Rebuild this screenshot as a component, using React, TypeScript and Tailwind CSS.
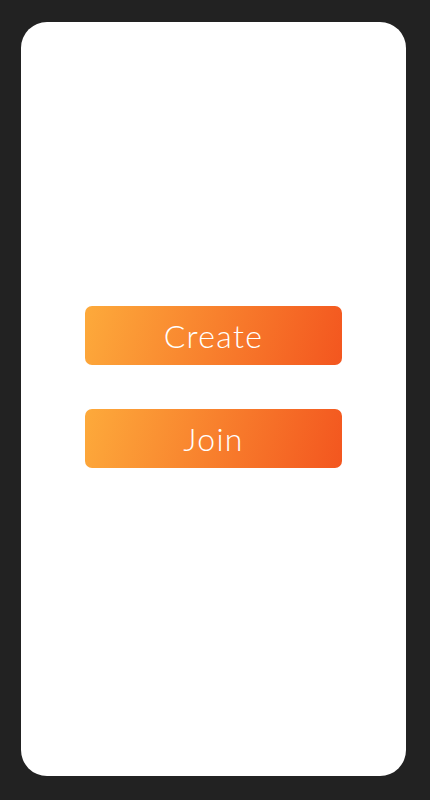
export default function App() {
  const buttons = ['Create', 'Join']

  return (
    <div className="w-[430px] h-[800px] bg-[#222222] pt-[22px] pl-[21px]">
      <div className="w-[385px] h-[754px] bg-white rounded-[26px] flex flex-col items-center pt-[284px] gap-[44px]">
        {buttons.map((label) => (
          <button
            key={label}
            className="w-[257px] h-[59px] rounded-[7px] bg-linear-[105deg] from-[#fdaa3b] to-[#f3561f] text-white text-[32px] font-light tracking-[1.3px] leading-none flex items-center justify-center"
            style={{ fontFamily: 'Lato, "Noto Sans", sans-serif' }}
          >
            {label}
          </button>
        ))}
      </div>
    </div>
  )
}
